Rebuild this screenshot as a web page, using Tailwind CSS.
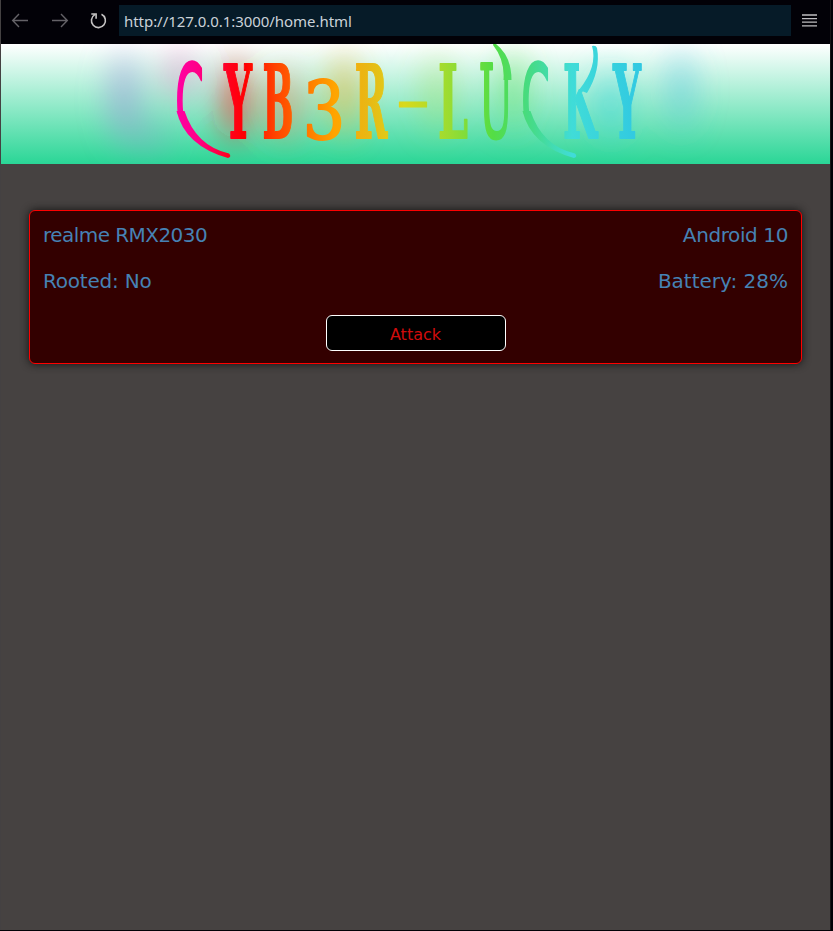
<!DOCTYPE html>
<html lang="en">
<head>
<meta charset="utf-8">
<title>home</title>
<script src="https://cdn.jsdelivr.net/npm/@tailwindcss/browser@4"></script>
</head>
<body class="h-[931px] w-[833px] overflow-hidden bg-[#020207]">
<div class="flex h-[930px] w-[831px] flex-col border-x border-l-[#444142] border-r-[#171717] bg-[#464241]">
  <header class="flex h-11 shrink-0 items-center bg-[#020107]">
    <svg class="h-11 w-[118px] shrink-0" viewBox="1 0 118 44" fill="none" stroke-width="1.4">
      <path d="M28 20.5H13M19 14l-6.3 6.5 6.3 6.5" stroke="#646267"/>
      <path d="M52 20.5h15M61 14l6.3 6.5L61 27" stroke="#646267"/>
      <path d="M101.5 14.3A7 7 0 1 1 94.8 14.6M91.3 14h4.8v4.8" stroke="#c5c3c3" stroke-width="1.6"/>
    </svg>
    <div class="-mt-[3px] flex h-[31px] w-[672px] items-center bg-[#061b28] pl-[5px] pt-[2px] font-['Noto_Sans',sans-serif] text-[15px] text-[#cbd2d9]"><span class="whitespace-nowrap tracking-[-0.05px]">http://127.0.0.1:3000/home.html</span></div>
    <svg class="ml-[11px] -mt-[3px] h-4 w-4" viewBox="0 0 16 16" stroke="#bebdc0" stroke-width="1.3"><path d="M0 2h15M0 5.6h15M0 9.2h15M0 12.8h15"/></svg>
  </header>
  <section class="h-[120px] shrink-0 bg-[linear-gradient(#fff,#2ad696)]">
    <svg class="h-[120px] w-[829px]" viewBox="1 44 829 120" font-family="'DejaVu Serif',serif" font-weight="400" font-size="101" text-anchor="middle">
      <defs>
        <linearGradient id="rainbow" gradientUnits="userSpaceOnUse" x1="176" y1="0" x2="642" y2="0">
          <stop offset="0" stop-color="#ff00a5"/><stop offset=".05" stop-color="#ff0085"/><stop offset=".11" stop-color="#ff0020"/><stop offset=".15" stop-color="#ff0000"/><stop offset=".21" stop-color="#ff4000"/><stop offset=".28" stop-color="#ff7800"/><stop offset=".34" stop-color="#ffa400"/><stop offset=".41" stop-color="#e9b714"/><stop offset=".49" stop-color="#d9d91b"/><stop offset=".59" stop-color="#98dc32"/><stop offset=".68" stop-color="#54dd45"/><stop offset=".76" stop-color="#46db85"/><stop offset=".85" stop-color="#40dcd8"/><stop offset="1" stop-color="#30c8e2"/>
        </linearGradient>
        <filter id="glow" filterUnits="userSpaceOnUse" x="1" y="0" width="829" height="210"><feGaussianBlur stdDeviation="15 17"/></filter>
        <clipPath id="openC1"><path d="M170 50h40v60h-20v4h-20Z"/></clipPath>
        <clipPath id="openC2"><path d="M516 50h40v60h-20v4h-20Z"/></clipPath>
        <clipPath id="hornU"><path d="M475 50h24v28h20v66h-44Z"/></clipPath>
        <clipPath id="hornK"><path d="M555 50h24v39h25v55h-49Z"/></clipPath>
      </defs>
      <g filter="url(#glow)">
        <ellipse cx="124" cy="98" rx="16" ry="44" fill="#9c8fd8" opacity=".52"/>
        <ellipse cx="150" cy="138" rx="22" ry="9" fill="#9c8fd8" opacity=".5"/>
        <ellipse cx="180" cy="75" rx="18" ry="24" fill="#f070c0" opacity=".42"/>
        <ellipse cx="236" cy="101" rx="13" ry="38" fill="#ff2020" opacity=".7"/>
        <ellipse cx="285" cy="105" rx="18" ry="34" fill="#f08050" opacity=".5"/>
        <ellipse cx="344" cy="95" rx="15" ry="38" fill="#e8b840" opacity=".7"/>
        <ellipse cx="438" cy="95" rx="18" ry="36" fill="#a6df58" opacity=".4"/>
        <ellipse cx="513" cy="90" rx="16" ry="38" fill="#60df50" opacity=".45"/>
        <ellipse cx="611" cy="105" rx="20" ry="32" fill="#38d6df" opacity=".5"/>
        <ellipse cx="681" cy="90" rx="16" ry="38" fill="#4cbfe2" opacity=".42"/>
      </g>
      <g fill="url(#rainbow)" stroke="url(#rainbow)" stroke-width="1.8" stroke-linejoin="round" font-weight="700">
        <g clip-path="url(#openC1)" stroke-width="3.5"><text x="189.500" y="138" textLength="28" lengthAdjust="spacingAndGlyphs" font-family="'DejaVu Sans',sans-serif" font-weight="400">C</text></g>
        <text x="238" y="138" textLength="28" lengthAdjust="spacingAndGlyphs">Y</text>
        <text x="278" y="138" textLength="31" lengthAdjust="spacingAndGlyphs">B</text>
        <text x="324" y="139" textLength="43" lengthAdjust="spacingAndGlyphs" font-size="80" font-weight="400">3</text>
        <text x="371" y="138" textLength="33" lengthAdjust="spacingAndGlyphs">R</text>
        <text x="413" y="122" textLength="36" lengthAdjust="spacingAndGlyphs" font-size="66" stroke-width="1" font-weight="400">-</text>
        <text x="453" y="138" textLength="30" lengthAdjust="spacingAndGlyphs">L</text>
        <g clip-path="url(#hornU)" stroke-width="3.2"><text x="496" y="138" textLength="34" lengthAdjust="spacingAndGlyphs" font-weight="400">U</text></g>
        <g clip-path="url(#openC2)" stroke-width="3.5"><text x="535.500" y="138" textLength="28" lengthAdjust="spacingAndGlyphs" font-family="'DejaVu Sans',sans-serif" font-weight="400">C</text></g>
        <g clip-path="url(#hornK)"><text x="580" y="138" textLength="34" lengthAdjust="spacingAndGlyphs">K</text></g>
        <text x="627" y="138" textLength="28" lengthAdjust="spacingAndGlyphs">Y</text>
      </g>
      <!-- flourishes -->
      <g fill="url(#rainbow)">
        <path d="M176.500 111h8Q196 146 229 153.500q3 3-1 4.500Q185 146 176.500 111Z"/>
        <path d="M522.500 111h8Q542 146 575 153.500q3 3-1 4.500Q531 146 522.500 111Z"/>
        <path d="M493 45q0-2 3-1Q511.500 56 511.500 80h-8Q505 60 493 45Z"/>
        <path d="M592 46q4-1 5 2Q601 70 587 93l-8-3Q598 66 592 46Z"/>
      </g>
    </svg>
  </section>
  <main class="px-7 pt-[46px] font-['DejaVu_Sans',Verdana,sans-serif]">
    <article class="h-[154px] w-[773px] rounded-md border border-[#ff0000] bg-[#330000] px-3 pt-3 text-[20px] leading-[24px] text-[#4682b4] shadow-[0_0_8px_#111]">
      <div class="flex justify-between pl-[1px] pr-[1px]"><span class="tracking-[-0.55px]">realme RMX2030</span><span class="tracking-[-0.4px]">Android 10</span></div>
      <div class="mt-[22px] flex justify-between pl-[1px] pr-[1px]"><span class="tracking-[-0.2px]">Rooted: No</span><span>Battery: 28%</span></div>
      <button class="mx-auto mt-[22px] block h-9 w-[180px] rounded-md border border-white bg-black pt-[3px] text-[16px] leading-[24px] text-[#d00c0c]">Attack</button>
    </article>
  </main>
</div>
</body>
</html>
